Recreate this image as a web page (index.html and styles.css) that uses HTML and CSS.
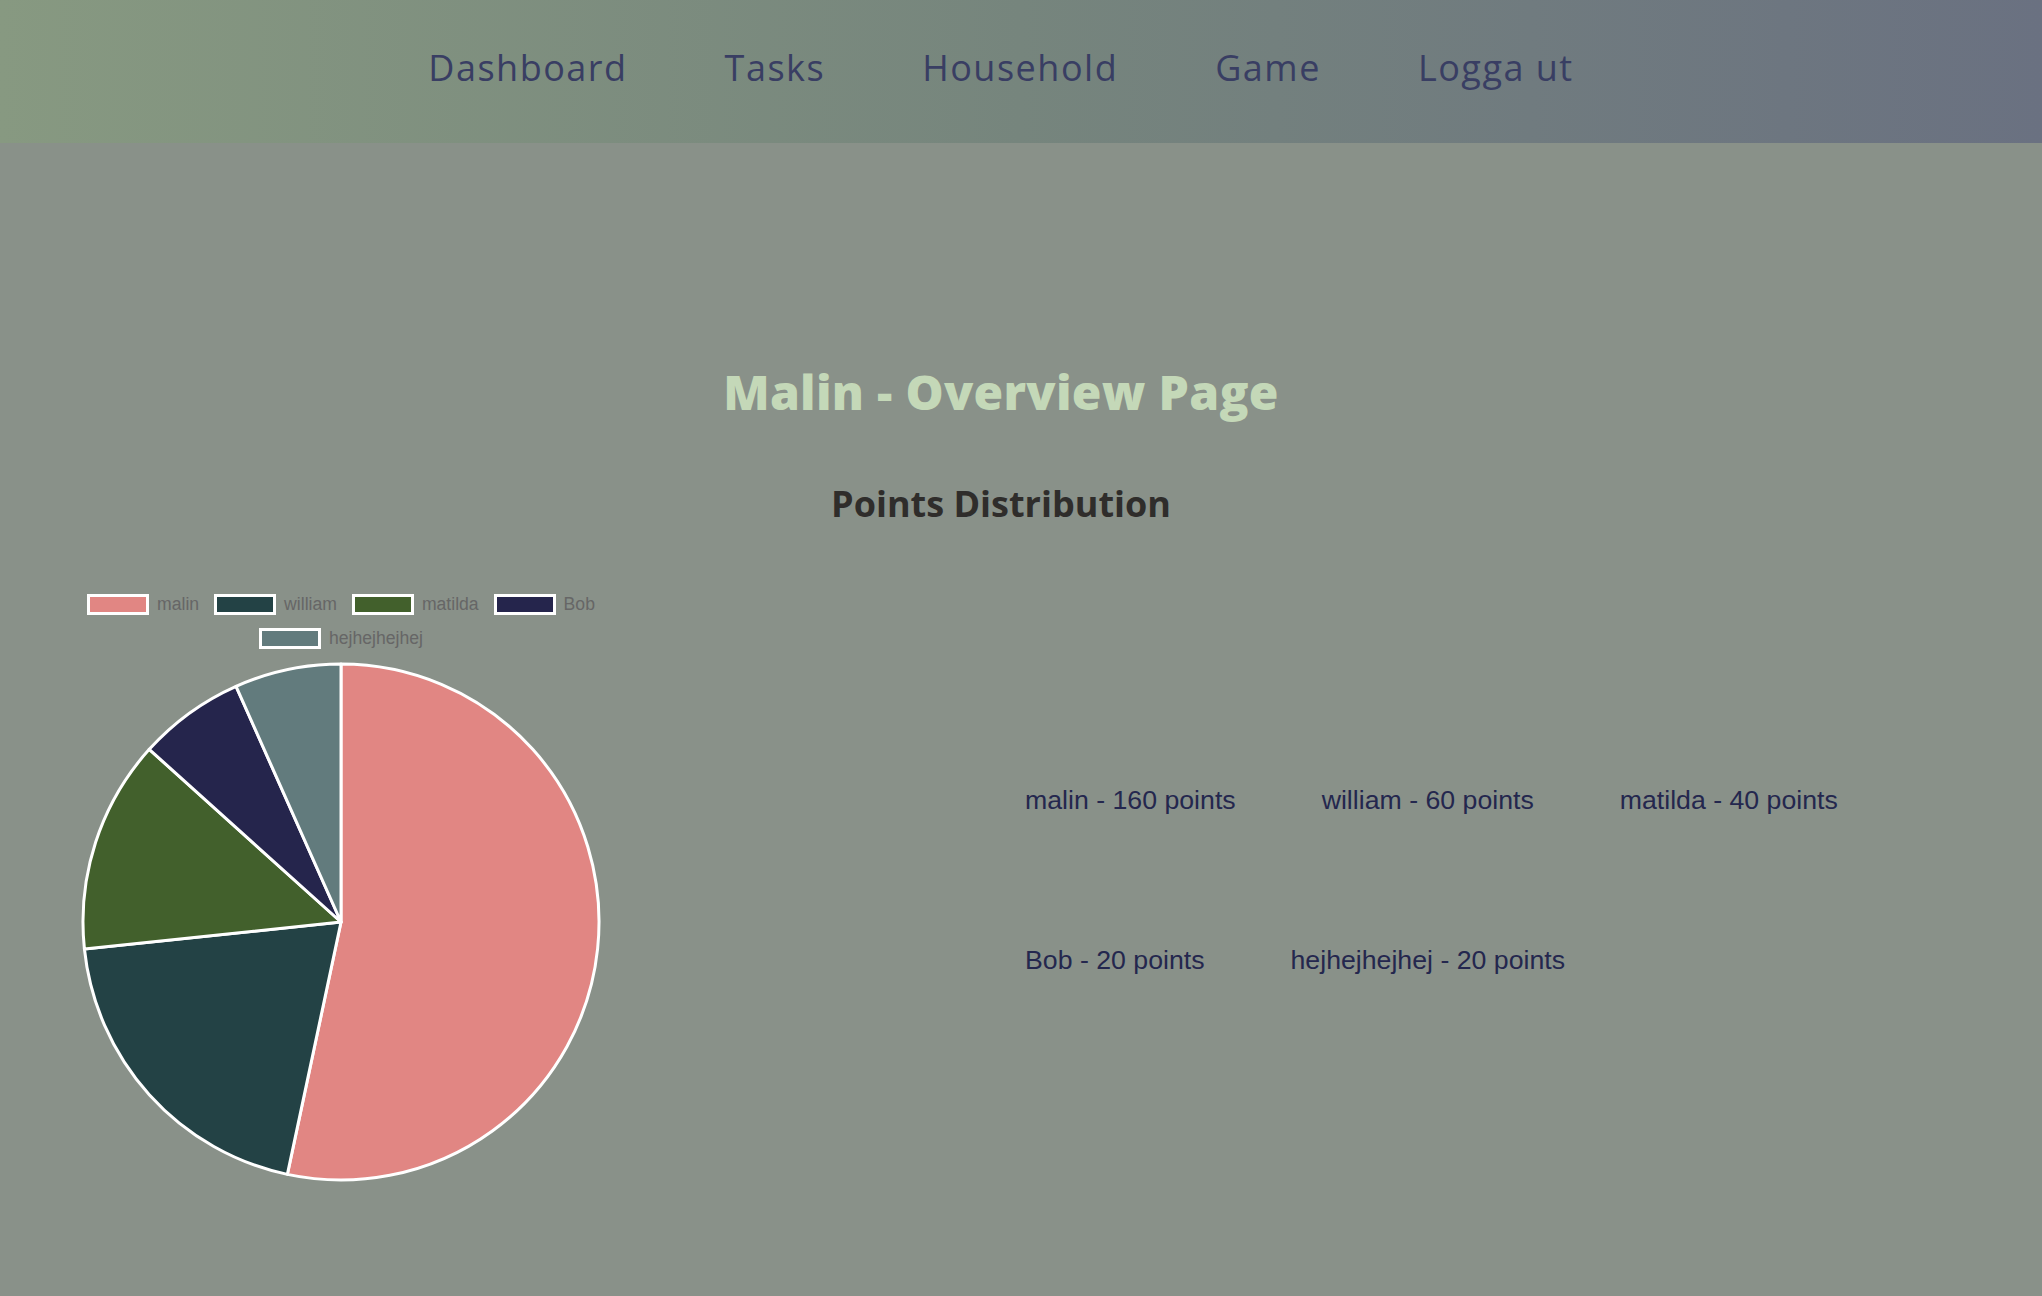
FILE: index.html
```html
<!DOCTYPE html>
<html lang="sv">
<head>
<meta charset="utf-8">
<title>Malin - Overview Page</title>
<link rel="stylesheet" href="styles.css">
</head>
<body>
<header class="topbar">
  <nav>
    <ul class="nav">
      <li><a href="#">Dashboard</a></li>
      <li><a href="#">Tasks</a></li>
      <li><a href="#">Household</a></li>
      <li><a href="#">Game</a></li>
      <li><a href="#">Logga ut</a></li>
    </ul>
  </nav>
</header>
<main class="overview">
  <h1 class="title">Malin - Overview Page</h1>
  <h2 class="subtitle">Points Distribution</h2>
  <section class="stats">
    <div class="chart">
      <ul class="legend">
        <li><span class="swatch c-malin"></span>malin</li>
        <li><span class="swatch c-william"></span>william</li>
        <li><span class="swatch c-matilda"></span>matilda</li>
        <li><span class="swatch c-bob"></span>Bob</li>
        <li><span class="swatch c-hej"></span>hejhejhejhej</li>
      </ul>
      <svg class="pie" width="522" height="522" viewBox="0 0 522 522">
        <g stroke="#ffffff" stroke-width="3" stroke-linejoin="round">
          <path class="s-malin" d="M261 261 L261 3 A258 258 0 1 1 207.36 513.36 Z"/>
          <path class="s-william" d="M261 261 L207.36 513.36 A258 258 0 0 1 4.41 287.97 Z"/>
          <path class="s-matilda" d="M261 261 L4.41 287.97 A258 258 0 0 1 69.27 88.36 Z"/>
          <path class="s-bob" d="M261 261 L69.27 88.36 A258 258 0 0 1 156.06 25.30 Z"/>
          <path class="s-hej" d="M261 261 L156.06 25.30 A258 258 0 0 1 261 3 Z"/>
        </g>
      </svg>
    </div>
    <ul class="points">
      <li>malin - 160 points</li>
      <li>william - 60 points</li>
      <li>matilda - 40 points</li>
      <li>Bob - 20 points</li>
      <li>hejhejhejhej - 20 points</li>
    </ul>
  </section>
</main>
</body>
</html>
```

FILE: styles.css
```css
* { box-sizing: border-box; }

html, body {
  margin: 0;
  padding: 0;
}

body {
  background: #899189;
  font-family: "Open Sans", "Liberation Sans", sans-serif;
  min-height: 1296px;
}

.topbar {
  height: 143px;
  background: linear-gradient(to right, #879981 0%, #76857d 50%, #6a7181 100%);
  padding-top: 46px;
  padding-right: 40px;
}

.nav {
  list-style: none;
  margin: 0;
  padding: 0;
  display: flex;
  justify-content: center;
  gap: 97px;
}

.nav a {
  display: block;
  font-size: 36px;
  line-height: 1.2;
  color: #393e63;
  text-decoration: none;
  letter-spacing: 1.5px;
}

.overview {
  padding-right: 40px;
}

.title {
  margin: 220px 0 0;
  text-align: center;
  font-size: 48px;
  line-height: 1.2;
  font-weight: 800;
  color: #c4d8b8;
  letter-spacing: 0.3px;
}

.subtitle {
  margin: 61px 0 0;
  text-align: center;
  font-size: 36px;
  line-height: 1.2;
  font-weight: 700;
  color: #2f2d2b;
}

.stats {
  display: grid;
  grid-template-columns: 1fr 1fr;
  margin-top: 69px;
}

.chart {
  margin-left: 80px;
  width: 522px;
  display: flex;
  flex-direction: column;
  align-items: center;
}

.legend {
  list-style: none;
  margin: 0;
  padding: 0;
  display: flex;
  flex-wrap: wrap;
  justify-content: center;
  column-gap: 15px;
  row-gap: 13px;
  font-family: "Liberation Sans", Arial, sans-serif;
  font-size: 17.6px;
  color: #666666;
}

.legend li {
  display: flex;
  align-items: center;
  gap: 8px;
  height: 21px;
}

.swatch {
  display: block;
  width: 62px;
  height: 21px;
  border: 3px solid #ffffff;
}

.c-malin { background: #e18683; }
.c-william { background: #234245; }
.c-matilda { background: #42602c; }
.c-bob { background: #25254c; }
.c-hej { background: #627b7d; }

.pie {
  display: block;
  margin-top: 12px;
}

.s-malin { fill: #e18683; }
.s-william { fill: #234245; }
.s-matilda { fill: #42602c; }
.s-bob { fill: #25254c; }
.s-hej { fill: #627b7d; }

.points {
  list-style: none;
  margin: 190px 0 0;
  padding: 0 0 0 24px;
  display: flex;
  flex-wrap: wrap;
  align-content: flex-start;
  column-gap: 86px;
  row-gap: 128px;
  font-family: "Liberation Sans", Arial, sans-serif;
  font-size: 26.7px;
  line-height: 1.2;
  color: #24274e;
}
```
